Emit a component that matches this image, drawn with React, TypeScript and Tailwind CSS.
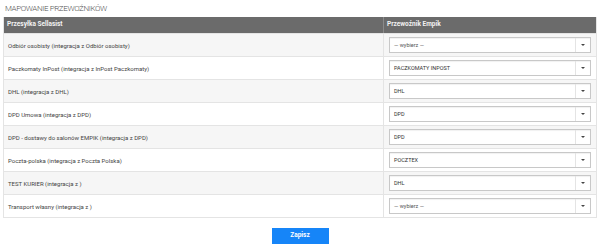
const rows = [
  { name: 'Odbiór osobisty (integracja z Odbiór osobisty)', value: '— wybierz —' },
  { name: 'Paczkomaty InPost (integracja z InPost Paczkomaty)', value: 'PACZKOMATY INPOST' },
  { name: 'DHL (integracja z DHL)', value: 'DHL' },
  { name: 'DPD Umowa (integracja z DPD)', value: 'DPD' },
  { name: 'DPD - dostawy do salonów EMPIK (integracja z DPD)', value: 'DPD' },
  { name: 'Poczta-polska (integracja z Poczta Polska)', value: 'POCZTEX' },
  { name: 'TEST KURIER (integracja z )', value: 'DHL' },
  { name: 'Transport własny (integracja z )', value: '— wybierz —' },
];

const App = () => {
  return (
    <div className="w-[604px] h-[247px] bg-white px-[3px] pt-[4px] font-['Roboto',sans-serif] overflow-hidden">
      {/* Title */}
      <div className="h-[13px] pl-[2px] text-[8px] leading-[10px] tracking-[-0.4px] text-[#555] font-light">
        MAPOWANIE PRZEWOŹNIKÓW
      </div>

      {/* Table */}
      <div className="w-[594px] border-x border-b border-[#e4e4e4]">
        <div className="grid grid-cols-[380px_1fr] h-[16px] bg-[#6b6b6b] text-[6.5px] font-bold text-[#f2f2f2]">
          <div className="flex items-center pl-[3px] border-r border-[#8a8a8a]">Przesyłka Sellasist</div>
          <div className="flex items-center pl-[3px]">Przewoźnik Empik</div>
        </div>

        {rows.map((row, i) => (
          <div
            key={i}
            className={`grid grid-cols-[380px_1fr] h-[23px] border-t border-[#e4e4e4] ${
              i % 2 === 0 ? 'bg-[#f6f6f6]' : 'bg-white'
            }`}
          >
            <div className="flex items-center pl-[4px] text-[6px] text-[#444] border-r border-[#e4e4e4]">
              {row.name}
            </div>
            <div className="flex items-center px-[5px]">
              <div className="flex w-full h-[16px] bg-white border border-[#c8c8c8] shadow-[inset_0_1px_1px_rgba(0,0,0,0.06)]">
                <div
                  className={`flex-1 flex items-center pl-[4px] text-[5.5px] ${
                    row.value.startsWith('—') ? 'text-[#555]' : 'text-[#333]'
                  }`}
                >
                  {row.value}
                </div>
                <div className="w-[15px] flex items-center justify-center border-l border-[#e4e4e4]">
                  <div className="w-0 h-0 border-x-[2px] border-x-transparent border-t-[2.5px] border-t-[#444]" />
                </div>
              </div>
            </div>
          </div>
        ))}
      </div>

      {/* Save */}
      <div className="flex justify-center mt-[10px] w-[594px]">
        <button
          type="button"
          className="w-[57px] h-[16px] bg-[#1685f8] text-white text-[6.5px] font-bold"
        >
          Zapisz
        </button>
      </div>
    </div>
  );
};

export default App;
